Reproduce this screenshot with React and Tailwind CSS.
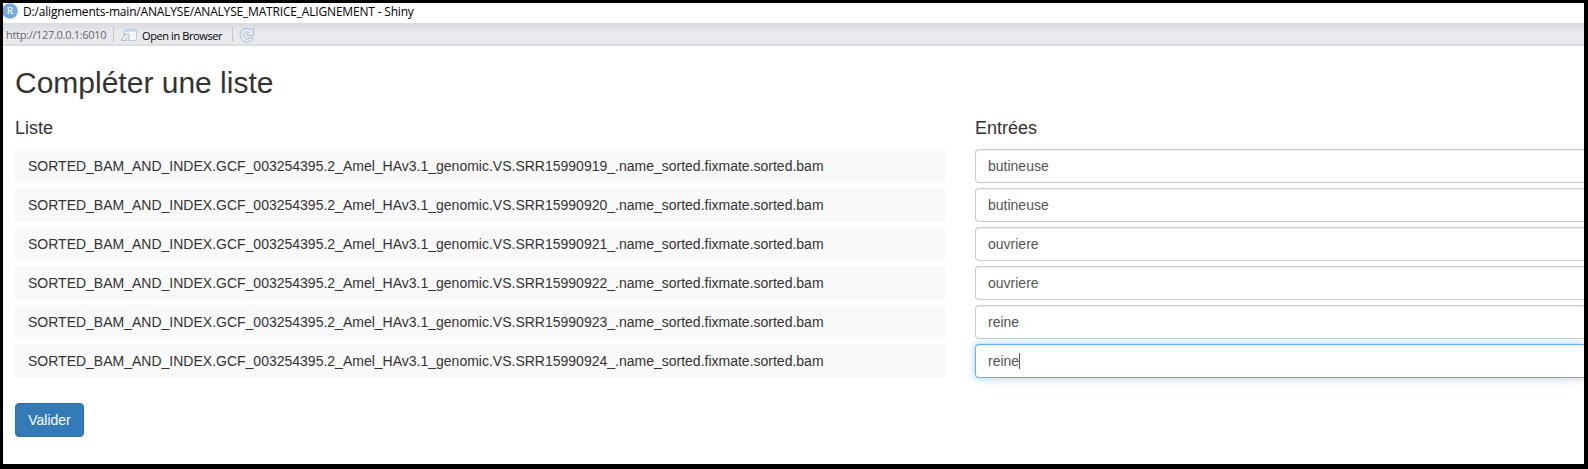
const rows = [
  { id: "919", entry: "butineuse" },
  { id: "920", entry: "butineuse" },
  { id: "921", entry: "ouvriere" },
  { id: "922", entry: "ouvriere" },
  { id: "923", entry: "reine" },
  { id: "924", entry: "reine", focused: true },
];

const field = "h-[34px] rounded-l-[4px] border border-r-0 bg-white pl-3 text-[14px] leading-[32px] text-[#555] flex items-center";
const idle = "border-[#ccc] shadow-[inset_0_1px_1px_rgba(0,0,0,0.075)]";
const active = "border-[#66afe9] shadow-[inset_0_1px_1px_rgba(0,0,0,0.075),0_0_8px_rgba(102,175,233,0.6)]";

function RLogo() {
  return (
    <svg className="h-4 w-[15px] shrink-0" viewBox="0 0 15 16">
      <circle cx="7" cy="8" r="7.8" fill="#75aadb" />
      <text x="7.2" y="11.3" textAnchor="middle" fontSize="10" fill="#fff" fontFamily="Liberation Serif, serif">R</text>
    </svg>
  );
}

function OpenIcon() {
  return (
    <svg className="ml-[7px] h-3 w-4 shrink-0" viewBox="0 0 16 12">
      <rect x="3.5" y="0.5" width="12" height="11" rx="1.5" fill="#f6f9fc" stroke="#b9cbdc" />
      <path d="M4 1h11v2H4z" fill="#c5dff2" />
      <path d="M0.6 11.4V9.8l3.2-3.2-1.5-1.5H8v5.4L6.4 8.9l-2.6 2.5z" fill="#eef1f4" stroke="#a3b0bc" strokeWidth="0.9" />
    </svg>
  );
}

function ReloadIcon() {
  return (
    <svg className="ml-[6px] h-4 w-4 shrink-0" viewBox="0 0 16 16" fill="none">
      <path d="M12.3 2.9A6.9 6.9 0 1 0 14.4 10.8H10.9A3.6 3.6 0 1 1 10 5.3L8.2 7.1V8.5H14.6V1H14.2z" fill="#e2ecf7" stroke="#b0bfce" strokeWidth="1" />
    </svg>
  );
}

export default function App() {
  return (
    <div className="h-[469px] w-[1588px] overflow-hidden bg-black pt-[3px] pr-1 pb-[5px] pl-[3px]">
      <div className="flex h-[461px] flex-col overflow-hidden bg-white font-['Liberation_Sans',sans-serif] text-[#333]">
        <header className="flex h-5 shrink-0 items-start font-['Open_Sans',sans-serif] text-[12px] text-black">
          <RLogo />
          <span className="ml-[5px] whitespace-nowrap leading-[18px] tracking-[-0.185px]">D:/alignements-main/ANALYSE/ANALYSE_MATRICE_ALIGNEMENT - Shiny</span>
        </header>
        <nav className="flex h-[23px] shrink-0 items-center whitespace-nowrap border-b-2 border-[#dcdfe2] bg-linear-to-b from-[#dadbdf] to-[#e9eaee] to-50% pt-[2px] pl-[3px] font-['Open_Sans',sans-serif] text-[11px]">
          <span className="w-[100px] pt-[2px] tracking-[-0.31px] text-[#666]">http://127.0.0.1:6010</span>
          <span className="ml-[7px] h-[15px] w-px bg-[#c4c6c9]" />
          <OpenIcon />
          <span className="ml-[5px] w-[80px] pt-[3px] tracking-[-0.4px] text-black">Open in Browser</span>
          <span className="ml-[10px] h-[15px] w-px bg-[#c4c6c9]" />
          <ReloadIcon />
        </nav>
        <main className="px-3">
          <h2 className="mt-5 mb-[10px] text-[30px] leading-[33px]">Compléter une liste</h2>
          <div className="flex gap-[30px]">
            <section className="w-[930px] shrink-0">
              <h4 className="mb-[11px] pt-[9px] text-[18px] leading-5">Liste</h4>
              <ul className="flex flex-col gap-[5px]">
                {rows.map((r) => (
                  <li key={r.id} className="h-[34px] bg-[#f9f9f9] pl-[13px] text-[14px] leading-[34px]">
                    {`SORTED_BAM_AND_INDEX.GCF_003254395.2_Amel_HAv3.1_genomic.VS.SRR15990${r.id}_.name_sorted.fixmate.sorted.bam`}
                  </li>
                ))}
              </ul>
            </section>
            <section className="-mr-3 grow">
              <h4 className="mb-[11px] pt-[9px] text-[18px] leading-5">Entrées</h4>
              <ul className="flex flex-col gap-[5px]">
                {rows.map((r) => (
                  <li key={r.id} className={`${field} ${r.focused ? active : idle}`}>
                    {r.entry}
                    {r.focused && <span className="h-4 w-px bg-[#555]" />}
                  </li>
                ))}
              </ul>
            </section>
          </div>
          <button className="mt-[25px] h-[34px] w-[69px] rounded-[4px] border border-[#2e6da4] bg-[#337ab7] text-[14px] leading-5 text-white">Valider</button>
        </main>
      </div>
    </div>
  );
}
